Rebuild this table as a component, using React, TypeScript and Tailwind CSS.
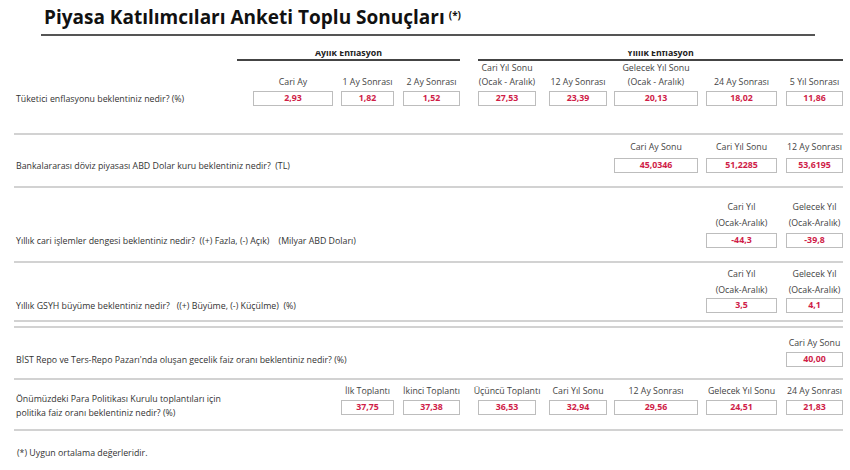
import React from "react";

const GRID = "grid grid-cols-[239px_80px_61px_66px_76px_71px_91px_79px_66px]";
const COL_START = ["", "col-start-2", "col-start-3", "col-start-4", "col-start-5", "col-start-6", "col-start-7", "col-start-8", "col-start-9"];
const BOX_W = ["", "w-[80px]", "w-[53px]", "w-[57px]", "w-[58px]", "w-[58px]", "w-[84px]", "w-[71px]", "w-[57px]"];

type Cell = { col: number; labels: string[]; value: string };

function Section({
  pt,
  gap,
  pb,
  lh,
  cells,
  question,
}: {
  pt: string;
  gap: string;
  pb: string;
  lh: string;
  cells: Cell[];
  question: React.ReactNode;
}) {
  return (
    <div className={pt}>
      <div className={GRID + " items-end ml-[14px] " + lh}>
        {cells.map((c) => (
          <div key={c.col} className={COL_START[c.col] + " row-start-1 flex justify-end"}>
            <div className={BOX_W[c.col] + " flex flex-col items-center text-[#444]"}>
              {c.labels.map((l, i) => (
                <div key={i} className="whitespace-nowrap">
                  {l}
                </div>
              ))}
            </div>
          </div>
        ))}
      </div>
      <div className={GRID + " items-center ml-[14px] " + gap}>
        <div className="col-start-1 row-start-1 h-[15px] flex items-center pl-[2px] text-[#333] leading-[14px] whitespace-pre">
          {question}
        </div>
        {cells.map((c) => (
          <div key={c.col} className={COL_START[c.col] + " row-start-1 flex justify-end"}>
            <div
              className={
                BOX_W[c.col] +
                " h-[15px] border border-[#bdbdbd] bg-white flex items-center justify-center font-bold text-[#cf1d48] leading-none"
              }
            >
              {c.value}
            </div>
          </div>
        ))}
      </div>
      <div className={pb} />
    </div>
  );
}

function Sep() {
  return <div className="ml-[14px] w-[829px] h-[2px] bg-[#d2d2d2]" />;
}

export default function App() {
  return (
    <div className="w-[850px] h-[470px] bg-white overflow-hidden font-['Open_Sans',sans-serif] text-[8.8px]">
      <div className="pl-[44px] pt-[5px] h-[29px] leading-[24px] text-[19px] font-bold text-[#111] whitespace-nowrap">
        Piyasa Katılımcıları Anketi Toplu Sonuçları
        <span className="ml-[4px] text-[10px] leading-[0] align-[5px]">(*)</span>
      </div>
      <div className="ml-[41px] mt-[5px] w-[774px] h-[2px] bg-[#555]" />

      <div className={GRID + " ml-[14px] pt-[15px]"}>
        <div className="col-start-2 col-span-3 -ml-[16px] flex flex-col">
          <div className="h-[8px] overflow-hidden text-center">
            <div className="-mt-[3px] leading-[10px] font-bold text-[#222]">Aylık Enflasyon</div>
          </div>
          <div className="h-[2px] bg-[#444]" />
        </div>
        <div className="col-start-5 col-span-5 pl-[18px] flex flex-col">
          <div className="h-[8px] overflow-hidden text-center">
            <div className="-mt-[3px] leading-[10px] font-bold text-[#222]">Yıllık Enflasyon</div>
          </div>
          <div className="h-[2px] bg-[#444]" />
        </div>
      </div>

      <Section
        pt="pt-0"
        gap="mt-[2px]"
        pb="h-[27px]"
        lh="leading-[14px]"
        question="Tüketici enflasyonu beklentiniz nedir? (%)"
        cells={[
          { col: 1, labels: ["Cari Ay"], value: "2,93" },
          { col: 2, labels: ["1 Ay Sonrası"], value: "1,82" },
          { col: 3, labels: ["2 Ay Sonrası"], value: "1,52" },
          { col: 4, labels: ["Cari Yıl Sonu", "(Ocak - Aralık)"], value: "27,53" },
          { col: 5, labels: ["12 Ay Sonrası"], value: "23,39" },
          { col: 6, labels: ["Gelecek Yıl Sonu", "(Ocak - Aralık)"], value: "20,13" },
          { col: 7, labels: ["24 Ay Sonrası"], value: "18,02" },
          { col: 8, labels: ["5 Yıl Sonrası"], value: "11,86" },
        ]}
      />
      <Sep />

      <Section
        pt="pt-[5px]"
        gap="mt-[4px]"
        pb="h-[13px]"
        lh="leading-[14px]"
        question="Bankalararası döviz piyasası ABD Dolar kuru beklentiniz nedir?  (TL)"
        cells={[
          { col: 6, labels: ["Cari Ay Sonu"], value: "45,0346" },
          { col: 7, labels: ["Cari Yıl Sonu"], value: "51,2285" },
          { col: 8, labels: ["12 Ay Sonrası"], value: "53,6195" },
        ]}
      />
      <Sep />

      <Section
        pt="pt-[11px]"
        gap="mt-[2px]"
        pb="h-[13px]"
        lh="leading-[16px]"
        question="Yıllık cari işlemler dengesi beklentiniz nedir?  ((+) Fazla, (-) Açık)    (Milyar ABD Doları)"
        cells={[
          { col: 7, labels: ["Cari Yıl", "(Ocak-Aralık)"], value: "-44,3" },
          { col: 8, labels: ["Gelecek Yıl", "(Ocak-Aralık)"], value: "-39,8" },
        ]}
      />
      <Sep />

      <Section
        pt="pt-[3px]"
        gap="mt-0"
        pb="h-[7px]"
        lh="leading-[16px]"
        question="Yıllık GSYH büyüme beklentiniz nedir?   ((+) Büyüme, (-) Küçülme)  (%)"
        cells={[
          { col: 7, labels: ["Cari Yıl", "(Ocak-Aralık)"], value: "3,5" },
          { col: 8, labels: ["Gelecek Yıl", "(Ocak-Aralık)"], value: "4,1" },
        ]}
      />
      <Sep />
      <div className="h-[4px]" />
      <Sep />

      <Section
        pt="pt-[8px]"
        gap="mt-[2px]"
        pb="h-[11px]"
        lh="leading-[14px]"
        question="BİST Repo ve Ters-Repo Pazarı'nda oluşan gecelik faiz oranı beklentiniz nedir? (%)"
        cells={[{ col: 8, labels: ["Cari Ay Sonu"], value: "40,00" }]}
      />
      <Sep />

      <Section
        pt="pt-[4px]"
        gap="mt-[2px]"
        pb="h-[14px]"
        lh="leading-[14px]"
        question={
          <div className="mb-[4px] whitespace-nowrap">
            <div>Önümüzdeki Para Politikası Kurulu toplantıları için</div>
            <div>politika faiz oranı beklentiniz nedir? (%)</div>
          </div>
        }
        cells={[
          { col: 2, labels: ["İlk Toplantı"], value: "37,75" },
          { col: 3, labels: ["İkinci Toplantı"], value: "37,38" },
          { col: 4, labels: ["Üçüncü Toplantı"], value: "36,53" },
          { col: 5, labels: ["Cari Yıl Sonu"], value: "32,94" },
          { col: 6, labels: ["12 Ay Sonrası"], value: "29,56" },
          { col: 7, labels: ["Gelecek Yıl Sonu"], value: "24,51" },
          { col: 8, labels: ["24 Ay Sonrası"], value: "21,83" },
        ]}
      />
      <Sep />

      <div className="pt-[15px] pl-[17px] leading-[14px] text-[#333]">(*) Uygun ortalama değerleridir.</div>
    </div>
  );
}
